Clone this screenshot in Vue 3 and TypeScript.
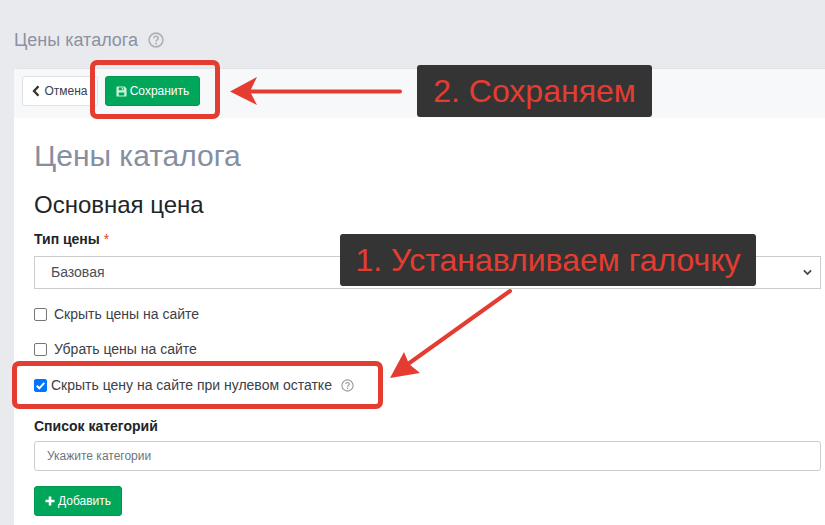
<script setup lang="ts">
const options = [
  { label: 'Скрыть цены на сайте' },
  { label: 'Убрать цены на сайте' },
]
</script>

<template>
  <div class="page">
    <h2 class="page-title">
      Цены каталога
      <svg class="help big" viewBox="0 0 16 16"><circle cx="8" cy="8" r="6.9" fill="none" stroke="currentColor" stroke-width="1.6"/><path d="M5.9 6.300c0-1.300 1-2 2.200-2s2.100.8 2.100 1.900c0 1.700-2.100 1.600-2.100 3.300" fill="none" stroke="currentColor" stroke-width="1.500"/><circle cx="8.100" cy="11.500" r="1" fill="currentColor"/></svg>
    </h2>
    <div class="card">
      <div class="toolbar">
        <button class="btn light">
          <svg class="chev" viewBox="0 0 8 12"><path d="M6.500 1.200 2 6l4.500 4.800" fill="none" stroke="currentColor" stroke-width="2.300"/></svg>
          Отмена
        </button>
        <button class="btn green">
          <svg class="ico" viewBox="0 0 12 12"><path fill="currentColor" fill-rule="evenodd" d="M1.500.5h7.800L11.500 2.700v7.800a1 1 0 0 1-1 1h-9a1 1 0 0 1-1-1v-9a1 1 0 0 1 1-1zM3 1.700v3h5.500v-3zM6.300 2.200h1.400v2H6.300zM3 7v3.300h6V7z"/></svg>
          Сохранить
        </button>
      </div>
      <div class="body">
        <h1 class="title">Цены каталога</h1>
        <h3 class="sub">Основная цена</h3>
        <div class="label first">Тип цены <span class="req">*</span></div>
        <div class="select">
          <span class="value">Базовая</span>
          <svg class="caret" viewBox="0 0 10 7"><path d="M1 1.200 5 5.200l4-4" fill="none" stroke="#444" stroke-width="2"/></svg>
        </div>
        <label v-for="o in options" :key="o.label" class="check plain">
          <span class="box"></span>{{ o.label }}
        </label>
        <label class="check active">
          <span class="box on"><svg viewBox="0 0 13 13"><path d="M2.800 6.800 5.300 9.300 10.300 3.800" fill="none" stroke="#fff" stroke-width="2"/></svg></span>
          Скрыть цену на сайте при нулевом остатке
          <svg class="help small" viewBox="0 0 16 16"><circle cx="8" cy="8" r="6.900" fill="none" stroke="currentColor" stroke-width="1.400"/><path d="M5.900 6.300c0-1.300 1-2 2.200-2s2.100.8 2.100 1.900c0 1.700-2.100 1.600-2.100 3.300" fill="none" stroke="currentColor" stroke-width="1.500"/><circle cx="8.100" cy="11.500" r="1" fill="currentColor"/></svg>
        </label>
        <div class="label second">Список категорий</div>
        <div class="input">Укажите категории</div>
        <button class="btn green add">
          <svg class="ico plus" viewBox="0 0 10 10"><path d="M5 .5v9M.5 5h9" fill="none" stroke="currentColor" stroke-width="2.600"/></svg>
          Добавить
        </button>
      </div>
    </div>

    <div class="frame frame-save"></div>
    <div class="frame frame-check"></div>
    <div class="note note-save">2. Сохраняем</div>
    <div class="note note-check">1. Устанавливаем галочку</div>
    <svg class="arrows" viewBox="0 0 825 525">
      <path d="M400 91.500H250" stroke="#e53c32" stroke-width="4" stroke-linecap="round" fill="none"/>
      <path d="M230 91.500 257 77 250 91.500 257 105z" fill="#e53c32"/>
      <path d="M510 291 408 364" stroke="#e53c32" stroke-width="4" stroke-linecap="round" fill="none"/>
      <path d="M390 378 404 352 409 364 420 373z" fill="#e53c32"/>
    </svg>
  </div>
</template>

<style>
body { margin: 0; }
</style>

<style scoped>
.page {
  position: relative;
  width: 825px;
  height: 525px;
  overflow: hidden;
  background: #e9eaed;
  font-family: "Liberation Sans", Arial, sans-serif;
  color: #212529;
}
.page-title {
  margin: 0;
  height: 68px;
  box-sizing: border-box;
  padding: 30px 0 0 14px;
  font-size: 18px;
  line-height: 20px;
  font-weight: 400;
  color: #8a92a3;
  display: flex;
  align-items: flex-start;
  gap: 10px;
}
.help { color: #adb0b6; }
.help.big { width: 16px; height: 16px; margin-top: 2px; }
.help.small { width: 13px; height: 13px; margin-left: 5px; color: #999; }
.card {
  margin-left: 14px;
  height: 457px;
  background: #fff;
  border-radius: 4px 0 0 0;
  overflow: hidden;
}
.toolbar {
  height: 50px;
  box-sizing: border-box;
  background: #f7f8fa;
  padding: 7px 8px 8px;
  display: flex;
  gap: 7px;
  border-top: 1px solid #e2e3e8;
}
.btn {
  height: 30px;
  box-sizing: border-box;
  border-radius: 3px;
  font: 12px/1 "Liberation Sans", Arial, sans-serif;
  display: inline-flex;
  align-items: center;
  justify-content: center;
  gap: 3px;
  padding: 0;
}
.light {
  width: 76px;
  background: #fff;
  border: 1px solid #dfe1e5;
  color: #3c4048;
  gap: 4px;
}
.chev { width: 8px; height: 12px; color: #333; }
.green {
  background: #00a65a;
  border: 1px solid #00994f;
  color: #fff;
  width: 95px;
}
.ico { width: 11px; height: 11px; color: #c7f3da; }
.plus { width: 10px; height: 10px; color: #fff; }
.body {
  padding: 0 20px;
  display: flex;
  flex-direction: column;
  align-items: flex-start;
}
.title {
  margin: 20px 0 0;
  font-size: 30px;
  line-height: 36px;
  font-weight: 400;
  color: #868e9f;
}
.sub {
  margin: 17px 0 0;
  font-size: 24px;
  line-height: 28px;
  font-weight: 400;
  color: #212529;
}
.label {
  font-size: 14px;
  line-height: 16px;
  font-weight: 700;
  color: #212529;
}
.label.first { margin-top: 12px; }
.req { color: #e53c32; font-weight: 400; }
.select {
  margin-top: 9px;
  width: 787px;
  height: 33px;
  box-sizing: border-box;
  border: 1px solid #ccc;
  padding: 0 8px 0 16px;
  display: flex;
  align-items: center;
  justify-content: space-between;
  font-size: 14px;
  color: #495057;
}
.value { margin-top: -2px; }
.caret { width: 9px; height: 7px; }
.check {
  display: flex;
  align-items: center;
  font-size: 14px;
  line-height: 16px;
  color: #3c4048;
}
.check.plain { margin-top: 17px; height: 18px; gap: 7px; }
.select + .check.plain { margin-top: 16px; }
.check.active { margin-top: 18px; height: 18px; gap: 4px; }
.box {
  width: 13px;
  height: 13px;
  box-sizing: border-box;
  border: 1px solid #767676;
  border-radius: 2px;
  background: #fff;
  display: block;
}
.box.on { background: #0075ff; border-color: #0075ff; position: relative; }
.box.on svg { position: absolute; left: -1px; top: -1px; width: 13px; height: 13px; display: block; }
.label.second { margin-top: 24px; }
.input {
  margin-top: 7px;
  width: 787px;
  height: 30px;
  box-sizing: border-box;
  border: 1px solid #ccc;
  border-radius: 3px;
  padding: 0 12px;
  display: flex;
  align-items: center;
  font-size: 12px;
  color: #6c757d;
}
.add { margin-top: 15px; width: 88px; }
.frame {
  position: absolute;
  box-sizing: border-box;
  border: 5px solid #e53c32;
  border-radius: 7px;
}
.frame-save { left: 90px; top: 60px; width: 130px; height: 59px; }
.frame-check { left: 12px; top: 361px; width: 371px; height: 48px; }
.note {
  position: absolute;
  background: rgba(45, 45, 45, 0.97);
  color: #e53c32;
  border-radius: 3px;
  font-size: 32px;
  display: flex;
  align-items: center;
  justify-content: center;
  height: 52px;
}
.note-save { left: 417px; top: 65px; width: 235px; }
.note-check { left: 340px; top: 234px; width: 416px; }
.arrows { position: absolute; left: 0; top: 0; width: 825px; height: 525px; pointer-events: none; }
</style>
